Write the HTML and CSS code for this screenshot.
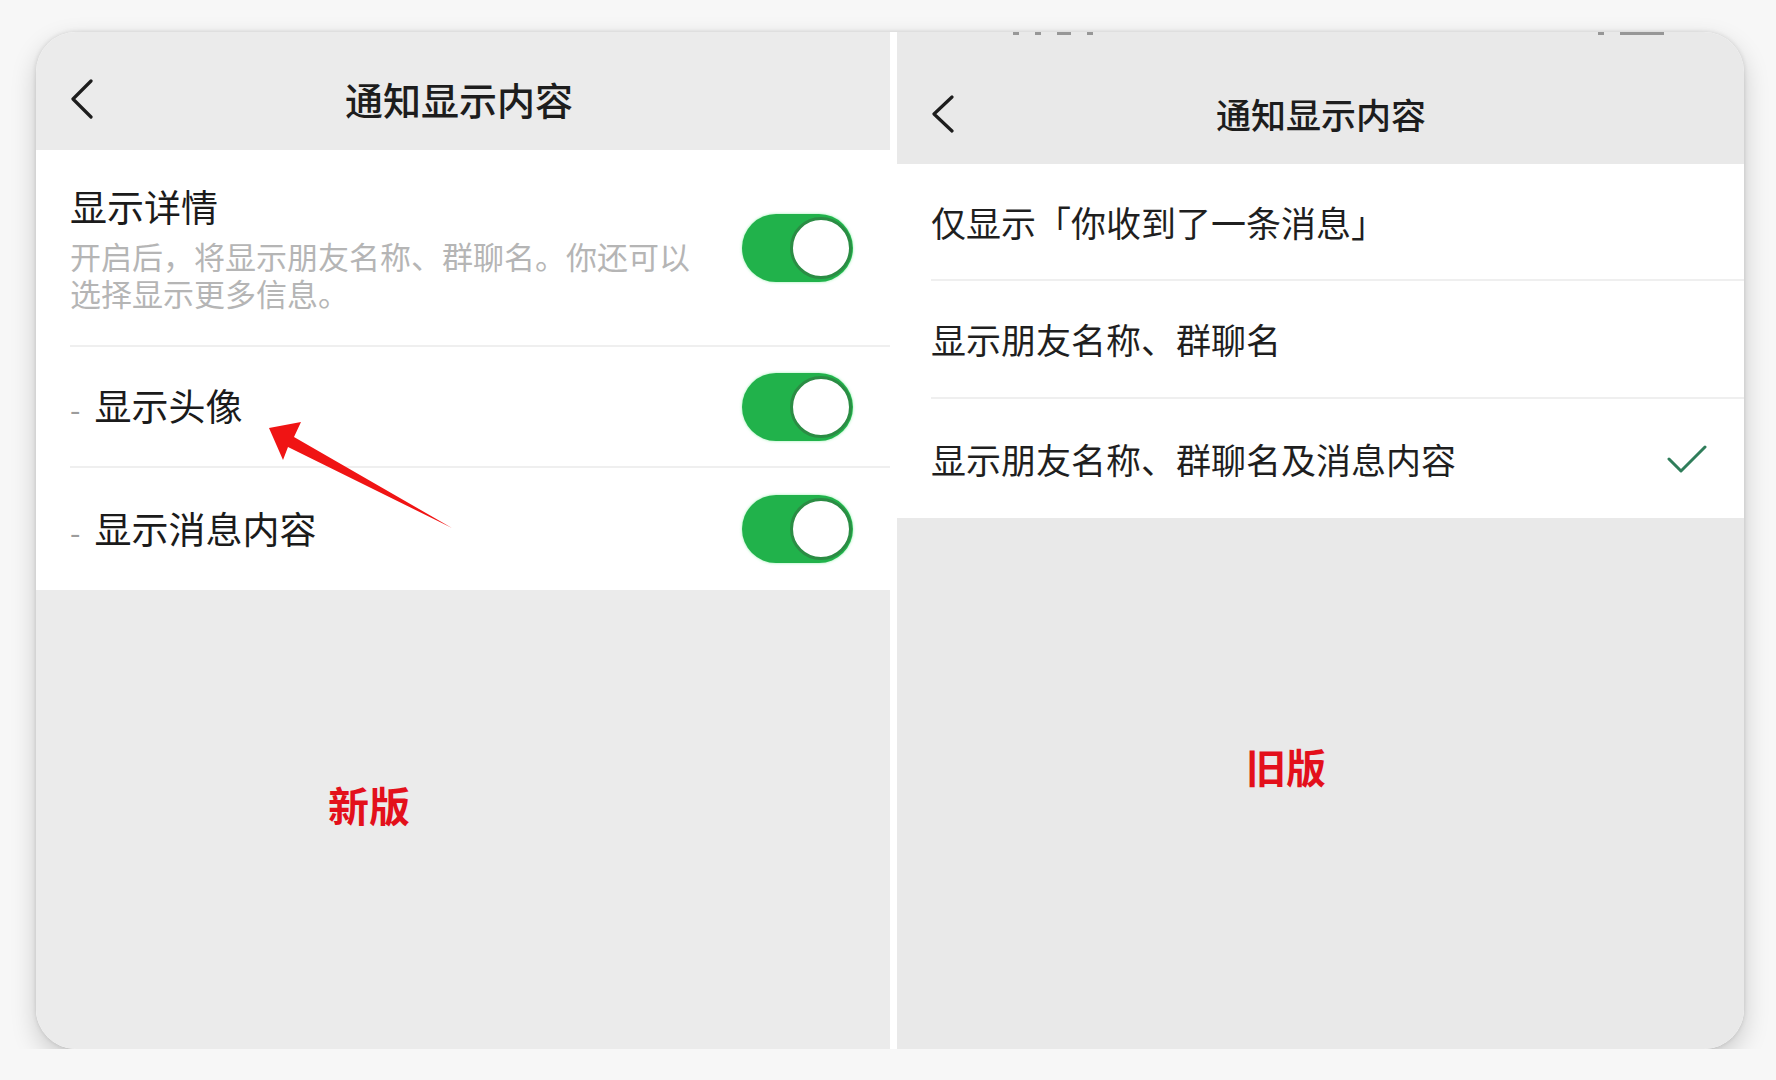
FILE: index.html
```html
<!DOCTYPE html>
<html lang="zh-CN">
<head>
    <meta charset="UTF-8">
    <meta name="viewport" content="width=device-width, initial-scale=1.0">
    <title>通知显示内容 - 新版与旧版</title>
    <link rel="stylesheet" href="styles.css">
</head>
<body>
    <div class="frame">

        <!-- 新版 -->
        <section class="panel panel-new">
            <header class="nav">
                <svg class="back" width="24" height="40" viewBox="0 0 24 40"><polyline points="21,2 3,20 21,38" fill="none" stroke="#1d1d1d" stroke-width="3.2" stroke-linecap="round" stroke-linejoin="round"/></svg>
                <h2 class="nav-title">通知显示内容</h2>
                <span></span>
            </header>

            <div class="group">
                <div class="cell cell-detail">
                    <div class="cell-body">
                        <div class="cell-title">显示详情</div>
                        <p class="cell-desc">开启后，将显示朋友名称、群聊名。你还可以选择显示更多信息。</p>
                    </div>
                    <span class="switch"><span class="knob"></span></span>
                </div>
                <div class="cell cell-sub">
                    <div class="cell-title"><span class="dash">-</span>显示头像</div>
                    <span class="switch"><span class="knob"></span></span>
                </div>
                <div class="cell cell-sub">
                    <div class="cell-title"><span class="dash">-</span>显示消息内容</div>
                    <span class="switch"><span class="knob"></span></span>
                </div>
            </div>

            <div class="caption caption-new">新版</div>

            <!-- 标注箭头 -->
            <svg class="arrow" width="190" height="112" viewBox="0 0 190 112">
                <polygon points="3,8 35,2 28,17 186,108 22,27 17,40" fill="#f01414"/>
            </svg>
        </section>

        <!-- 旧版 -->
        <section class="panel panel-old">
            <header class="nav nav-old">
                <div class="status">
                    <i class="s1"></i><i class="s1"></i><i class="s2"></i><i class="s1"></i>
                    <span class="status-gap"></span>
                    <i class="s1"></i><i class="s3"></i>
                </div>
                <svg class="back" width="24" height="38" viewBox="0 0 24 38"><polyline points="21,2 3,19 21,36" fill="none" stroke="#1d1d1d" stroke-width="3.2" stroke-linecap="round" stroke-linejoin="round"/></svg>
                <h2 class="nav-title">通知显示内容</h2>
                <span></span>
            </header>

            <div class="group">
                <div class="cell cell-option">
                    <div class="option-text">仅显示「你收到了一条消息」</div>
                </div>
                <div class="cell cell-option">
                    <div class="option-text">显示朋友名称、群聊名</div>
                </div>
                <div class="cell cell-option">
                    <div class="option-text">显示朋友名称、群聊名及消息内容</div>
                    <svg class="check" width="40" height="30" viewBox="0 0 40 30"><polyline points="2,15 14,27 38,3" fill="none" stroke="#2f7d5a" stroke-width="3" stroke-linecap="round" stroke-linejoin="round"/></svg>
                </div>
            </div>

            <div class="caption caption-old">旧版</div>
        </section>

    </div>
</body>
</html>
```

FILE: styles.css
```css
body {
    margin: 0;
    padding: 0;
    background-color: #f7f7f7;
    font-family: "Noto Sans CJK SC", "Noto Sans", sans-serif;
    color: #1d1d1d;
}
.frame {
    display: flex;
    gap: 7px;
    width: 1708px;
    height: 1017px;
    margin: 32px 0 0 36px;
    background-color: #fff;
    border-radius: 40px;
    overflow: hidden;
    box-shadow: 0 10px 26px rgba(0, 0, 0, 0.18), 0 0 5px rgba(0, 0, 0, 0.14);
}
.panel {
    position: relative;
    display: flex;
    flex-direction: column;
}
.panel-new {
    width: 854px;
    background-color: #ebebeb;
}
.panel-old {
    flex: 1;
    background-color: #e9e9e9;
}

/* 顶部导航 */
.nav {
    display: grid;
    grid-template-columns: 1fr auto 1fr;
    align-items: center;
    height: 118px;
    padding: 16px 42px 0 34px;
    box-sizing: border-box;
}
.nav-old {
    position: relative;
    height: 132px;
    padding: 32px 33px 0 34px;
}
.nav-title {
    margin: 0;
    font-size: 38px;
    font-weight: 500;
    line-height: 50px;
}
.nav-old .nav-title {
    font-size: 35px;
}
.back {
    display: block;
}
.status {
    position: absolute;
    top: 0;
    left: 116px;
    right: 80px;
    display: flex;
    gap: 16px;
    opacity: 0.55;
}
.status i {
    display: block;
    height: 3px;
    background-color: #555;
}
.status .s1 { width: 6px; }
.status .s2 { width: 14px; }
.status .s3 { width: 44px; }
.status-gap { flex: 1; }

/* 列表 */
.group {
    background-color: #fff;
    padding-left: 34px;
}
.cell {
    display: flex;
    align-items: center;
    justify-content: space-between;
    padding-right: 37px;
    box-sizing: border-box;
    border-bottom: 2px solid #efefef;
}
.cell:last-child {
    border-bottom: none;
}
.cell-detail {
    height: 197px;
}
.cell-sub {
    height: 121px;
}
.cell-sub:last-child {
    height: 122px;
}
.cell-title {
    font-size: 37px;
    line-height: 46px;
    color: #1b1b1b;
}
.cell-detail .cell-body {
    margin-top: -2px;
}
.cell-desc {
    width: 630px;
    margin: 8px 0 0;
    font-size: 31px;
    line-height: 37px;
    color: #b5b5b5;
}
.dash {
    margin-right: 14px;
    font-size: 30px;
    color: #9c9c9c;
}
.switch {
    display: flex;
    justify-content: flex-end;
    align-items: center;
    width: 111px;
    height: 68px;
    padding: 0 1px;
    box-sizing: border-box;
    background-color: #21b24b;
    border-radius: 34px;
    box-shadow: 0 0 3px rgba(80, 230, 120, 0.6);
    flex-shrink: 0;
}
.knob {
    width: 62px;
    height: 62px;
    box-sizing: border-box;
    background-color: #fff;
    border: 3px solid #2b8c44;
    border-radius: 50%;
}
.cell-option {
    height: 118px;
}
.cell-option:first-child {
    height: 117px;
}
.cell-option:last-child {
    height: 119px;
}
.option-text {
    font-size: 35px;
    line-height: 46px;
    color: #1f1f1f;
}
.check {
    display: block;
}

/* 标注 */
.caption {
    font-size: 41px;
    font-weight: 700;
    line-height: 50px;
    color: #e3101b;
}
.caption-new {
    margin: 189px 0 0 292px;
}
.caption-old {
    margin: 223px 0 0 349px;
    font-size: 40px;
}
.arrow {
    position: absolute;
    left: 230px;
    top: 388px;
}
```
